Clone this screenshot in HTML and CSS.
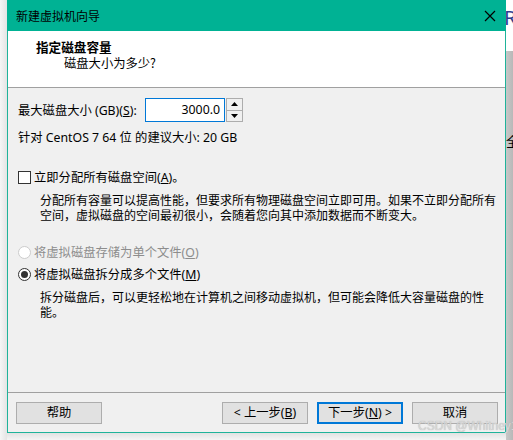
FILE: index.html
```html
<!DOCTYPE html>
<html lang="zh-CN">
<head>
<meta charset="utf-8">
<title>新建虚拟机向导</title>
<link rel="stylesheet" href="styles.css">
</head>
<body>
<div class="page">
  <div class="shadow-left"></div>
  <div class="col">
    <div class="window">
      <div class="titlebar">
        <span class="title">新建虚拟机向导</span>
        <svg class="close" width="12" height="12" viewBox="0 0 12 12"><path d="M1 1L11 11M11 1L1 11" stroke="#000" stroke-width="1.2" fill="none"/></svg>
      </div>
      <div class="header">
        <div class="h-title">指定磁盘容量</div>
        <div class="h-sub">磁盘大小为多少?</div>
      </div>
      <div class="body">
        <div class="size-row">
          <span class="label">最大磁盘大小 (GB)(<u>S</u>):</span>
          <div class="input">3000.0</div>
          <div class="spin">
            <div class="spin-btn"><svg width="7" height="4" viewBox="0 0 7 4"><path d="M0 4L3.5 0L7 4Z" fill="#000"/></svg></div>
            <div class="spin-btn"><svg width="7" height="4" viewBox="0 0 7 4"><path d="M0 0L3.5 4L7 0Z" fill="#000"/></svg></div>
          </div>
        </div>
        <div class="rec">针对 CentOS 7 64 位 的建议大小: 20 GB</div>
        <div class="check-row">
          <span class="checkbox"></span>
          <span>立即分配所有磁盘空间(<u>A</u>)。</span>
        </div>
        <p class="desc">分配所有容量可以提高性能，但要求所有物理磁盘空间立即可用。如果不立即分配所有空间，虚拟磁盘的空间最初很小，会随着您向其中添加数据而不断变大。</p>
        <div class="radio-row disabled">
          <span class="radio"></span>
          <span>将虚拟磁盘存储为单个文件(<u>O</u>)</span>
        </div>
        <div class="radio-row">
          <span class="radio checked"></span>
          <span>将虚拟磁盘拆分成多个文件(<u>M</u>)</span>
        </div>
        <p class="desc">拆分磁盘后，可以更轻松地在计算机之间移动虚拟机，但可能会降低大容量磁盘的性能。</p>
      </div>
      <div class="footer">
        <button class="btn">帮助</button>
        <div class="spacer"></div>
        <button class="btn">&lt; 上一步(<u>B</u>)</button>
        <button class="btn default">下一步(<u>N</u>) &gt;</button>
        <button class="btn">取消</button>
      </div>
    </div>
    <div class="shadow-bottom"></div>
  </div>
  <div class="side">
    <div class="side-top"><span class="side-r">R</span></div>
    <div class="side-rest"><span class="side-ch">全</span></div>
  </div>
  <div class="watermark">CSDN @Whitney1229</div>
</div>
</body>
</html>
```

FILE: styles.css
```css
* { box-sizing: border-box; }
html, body { margin: 0; padding: 0; }
body {
  width: 513px;
  height: 440px;
  overflow: hidden;
  font-family: "Noto Sans", "Noto Sans CJK SC", sans-serif;
  font-size: 12.3px;
  color: #000;
  background: #ededed;
}
.page {
  position: relative;
  display: flex;
  width: 513px;
  height: 440px;
}
.shadow-left {
  width: 7px;
  background: linear-gradient(to right, #f6f6f6, #e4e4e4);
}
.col {
  display: flex;
  flex-direction: column;
  width: 499px;
}
.window {
  width: 499px;
  height: 433px;
  border: 1px solid #1fb39a;
  border-top: none;
  display: flex;
  flex-direction: column;
  background: #f0f0f0;
}
.shadow-bottom {
  flex: 1;
  background: linear-gradient(to bottom, #e2e2e2, #f4f4f4);
}
.titlebar {
  height: 31px;
  margin: 0 -1px;
  background: #00b294;
  display: flex;
  align-items: center;
  padding: 0 0 0 9px;
}
.title {
  font-family: "Noto Sans CJK SC", sans-serif;
  font-size: 12px;
  flex: 1;
}
.close {
  margin-right: 10px;
}
.header {
  height: 57px;
  background: #fff;
  border-bottom: 1px solid #a0a0a0;
  padding: 7px 0 0 28px;
}
.h-title {
  font-family: "Noto Sans CJK SC", sans-serif;
  font-weight: bold;
  font-size: 12.6px;
  line-height: 17px;
}
.h-sub {
  font-family: "Noto Sans CJK SC", sans-serif;
  margin-left: 28px;
  line-height: 16px;
}
.body {
  flex: 1;
  padding: 10px 0 0 10px;
}
.size-row {
  display: flex;
  align-items: center;
  height: 24px;
}
.label { width: 127px; }
.input {
  width: 80px;
  height: 24px;
  border: 1px solid #0078d7;
  background: #fff;
  text-align: right;
  padding-right: 4px;
  line-height: 21px;
}
.spin {
  width: 17px;
  height: 24px;
  margin-left: 1px;
  border: 1px solid #adadad;
  background: #adadad;
  display: flex;
  flex-direction: column;
  gap: 1px;
}
.spin-btn {
  flex: 1;
  background: #f0f0f0;
  display: flex;
  align-items: center;
  justify-content: center;
}
.rec {
  margin-top: 8px;
  line-height: 15px;
}
.check-row {
  margin-top: 25px;
  display: flex;
  align-items: center;
  gap: 3px;
  line-height: 15px;
}
.checkbox {
  width: 13px;
  height: 13px;
  border: 1px solid #333;
  background: #fff;
}
.desc {
  margin: 7px 0 0 22px;
  width: 456px;
  line-height: 15px;
  font-size: 12px;
  font-family: "Noto Sans CJK SC", sans-serif;
}
.radio-row {
  display: flex;
  align-items: center;
  gap: 3px;
  line-height: 15px;
  margin-top: 7px;
}
.desc + .radio-row { margin-top: 23px; }
.radio-row.disabled { color: #8d8d8d; }
.radio {
  width: 13px;
  height: 13px;
  border: 1px solid #333;
  border-radius: 50%;
  background: #fff;
  display: flex;
  align-items: center;
  justify-content: center;
}
.disabled .radio { border-color: #cccccc; }
.radio.checked::after {
  content: "";
  width: 7px;
  height: 7px;
  border-radius: 50%;
  background: #333;
}
.footer {
  height: 40px;
  border-top: 1px solid #a0a0a0;
  display: flex;
  align-items: flex-start;
  padding: 9px 7px 0 8px;
  gap: 9px;
}
.spacer { flex: 1; }
.btn {
  width: 86px;
  height: 22px;
  border: 1px solid #adadad;
  background: #e1e1e1;
  font-family: "Noto Sans", "Noto Sans CJK SC", sans-serif;
  font-size: 12.3px;
  padding: 0;
  color: #000;
  line-height: 18px;
}
.btn.default { border: 2px solid #0078d7; }
.side {
  width: 7px;
  display: flex;
  flex-direction: column;
  overflow: hidden;
}
.side-top {
  height: 51px;
  background: #fff;
  padding-top: 8px;
}
.side-r {
  display: block;
  margin-left: -2px;
  color: #2f3d8f;
  font-size: 20px;
  line-height: 20px;
}
.side-rest {
  flex: 1;
  background: linear-gradient(to right, #c8c8c8, #b8b8b8);
  padding-top: 80px;
}
.side-ch {
  display: block;
  margin-left: 0;
  font-family: "Noto Sans CJK SC", sans-serif;
  font-size: 13px;
  white-space: nowrap;
}
.watermark {
  position: absolute;
  left: 418px;
  top: 419px;
  font-family: "Liberation Sans", sans-serif;
  font-size: 12px;
  color: #d8d8d8;
  text-shadow: 0 0 1px #aaa;
  white-space: nowrap;
}
```
